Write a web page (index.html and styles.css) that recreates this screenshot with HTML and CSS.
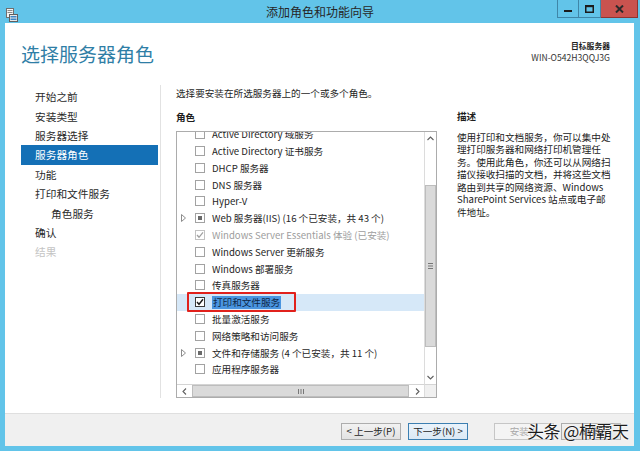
FILE: index.html
```html
<!DOCTYPE html>
<html lang="zh-CN">
<head>
<meta charset="utf-8">
<title>添加角色和功能向导</title>
<link rel="stylesheet" href="styles.css">
</head>
<body>
<div class="window">
  <div class="titlebar">
    <div class="app-icon">
      <svg width="12" height="14" viewBox="0 0 12 14">
        <rect x="0.5" y="0.5" width="7" height="9" fill="#f4f4f4" stroke="#6f6f6f"/>
        <rect x="1.5" y="2" width="5" height="1" fill="#8a8a8a"/>
        <rect x="1.5" y="4" width="5" height="1" fill="#8a8a8a"/>
        <rect x="3.5" y="6.5" width="8" height="7" fill="#e9e9e9" stroke="#5f5f5f"/>
        <rect x="4.5" y="8" width="6" height="1.5" fill="#3d86c6"/>
        <rect x="4.5" y="10.5" width="6" height="1.5" fill="#3d86c6"/>
      </svg>
    </div>
    <div class="title">添加角色和功能向导</div>
    <div class="caption-buttons">
      <div class="cbtn min"><svg width="8" height="8" viewBox="0 0 8 8"><rect x="0" y="5" width="8" height="2" fill="#1b1b1b"/></svg></div>
      <div class="cbtn max"><svg width="9" height="8" viewBox="0 0 9 8"><rect x="0.75" y="0.75" width="7.5" height="6.5" fill="none" stroke="#1b1b1b" stroke-width="1.5"/><rect x="0" y="0" width="9" height="2.2" fill="#1b1b1b"/></svg></div>
      <div class="cbtn close"><svg width="9" height="8" viewBox="0 0 9 8"><path d="M1 0.5 L8 7.5 M8 0.5 L1 7.5" stroke="#2a2a2a" stroke-width="2"/></svg></div>
    </div>
  </div>

  <div class="client">
    <div class="header">
      <h1 class="page-title">选择服务器角色</h1>
      <div class="target">
        <div class="target-label">目标服务器</div>
        <div class="target-name">WIN-O542H3QQJ3G</div>
      </div>
    </div>

    <div class="main">
      <ul class="nav">
        <li>开始之前</li>
        <li>安装类型</li>
        <li>服务器选择</li>
        <li class="active">服务器角色</li>
        <li>功能</li>
        <li>打印和文件服务</li>
        <li class="sub">角色服务</li>
        <li>确认</li>
        <li class="disabled">结果</li>
      </ul>
      <div class="sep"></div>

      <div class="content">
        <p class="instr">选择要安装在所选服务器上的一个或多个角色。</p>
        <div class="label">角色</div>
        <div class="listbox">
          <div class="rows">
            <div class="rows-inner">
              <div class="row"><span class="exp"></span><span class="cb"></span><span class="txt">Active Directory 域服务</span></div>
              <div class="row"><span class="exp"></span><span class="cb"></span><span class="txt">Active Directory 证书服务</span></div>
              <div class="row"><span class="exp"></span><span class="cb"></span><span class="txt">DHCP 服务器</span></div>
              <div class="row"><span class="exp"></span><span class="cb"></span><span class="txt">DNS 服务器</span></div>
              <div class="row"><span class="exp"></span><span class="cb"></span><span class="txt">Hyper-V</span></div>
              <div class="row"><span class="exp"><svg width="5" height="8" viewBox="0 0 5 8"><path d="M0.5 0.5 L4.5 4 L0.5 7.5 Z" fill="none" stroke="#8c8c8c"/></svg></span><span class="cb partial"></span><span class="txt">Web 服务器(IIS) (16 个已安装，共 43 个)</span></div>
              <div class="row disabled"><span class="exp"></span><span class="cb checked"><svg width="8" height="8" viewBox="0 0 8 8"><path d="M1 4 L3 6.3 L7 1.3" fill="none" stroke="#a0a0a0" stroke-width="1.3"/></svg></span><span class="txt">Windows Server Essentials 体验 (已安装)</span></div>
              <div class="row"><span class="exp"></span><span class="cb"></span><span class="txt">Windows Server 更新服务</span></div>
              <div class="row"><span class="exp"></span><span class="cb"></span><span class="txt">Windows 部署服务</span></div>
              <div class="row"><span class="exp"></span><span class="cb"></span><span class="txt">传真服务器</span></div>
              <div class="row selected"><span class="exp"></span><span class="cb checked dark"><svg width="8" height="8" viewBox="0 0 8 8"><path d="M1 4 L3 6.3 L7 1.3" fill="none" stroke="#1a1a1a" stroke-width="1.4"/></svg></span><span class="txt"><span class="sel-text">打印和文件服务</span></span><span class="mark"></span></div>
              <div class="row"><span class="exp"></span><span class="cb"></span><span class="txt">批量激活服务</span></div>
              <div class="row"><span class="exp"></span><span class="cb"></span><span class="txt">网络策略和访问服务</span></div>
              <div class="row"><span class="exp"><svg width="5" height="8" viewBox="0 0 5 8"><path d="M0.5 0.5 L4.5 4 L0.5 7.5 Z" fill="none" stroke="#8c8c8c"/></svg></span><span class="cb partial"></span><span class="txt">文件和存储服务 (4 个已安装，共 11 个)</span></div>
              <div class="row"><span class="exp"></span><span class="cb"></span><span class="txt">应用程序服务器</span></div>
            </div>
          </div>
          <div class="vscroll">
            <div class="sb-btn"><svg width="7" height="5" viewBox="0 0 7 5"><path d="M0.5 4 L3.5 1 L6.5 4" fill="none" stroke="#606060" stroke-width="1.1"/></svg></div>
            <div class="vtrack">
              <div class="vthumb"><svg width="5" height="6" viewBox="0 0 5 6"><rect y="0" width="5" height="1" fill="#777"/><rect y="2.5" width="5" height="1" fill="#777"/><rect y="5" width="5" height="1" fill="#777"/></svg></div>
            </div>
            <div class="sb-btn"><svg width="7" height="5" viewBox="0 0 7 5"><path d="M0.5 1 L3.5 4 L6.5 1" fill="none" stroke="#606060" stroke-width="1.1"/></svg></div>
          </div>
          <div class="hscroll">
            <div class="sb-btn h"><svg width="5" height="7" viewBox="0 0 5 7"><path d="M4 0.5 L1 3.5 L4 6.5" fill="none" stroke="#606060" stroke-width="1.1"/></svg></div>
            <div class="htrack">
              <div class="hthumb"><svg width="6" height="5" viewBox="0 0 6 5"><rect x="0" width="1" height="5" fill="#777"/><rect x="2.5" width="1" height="5" fill="#777"/><rect x="5" width="1" height="5" fill="#777"/></svg></div>
            </div>
            <div class="sb-btn h"><svg width="5" height="7" viewBox="0 0 5 7"><path d="M1 0.5 L4 3.5 L1 6.5" fill="none" stroke="#606060" stroke-width="1.1"/></svg></div>
          </div>
          <div class="corner"></div>
        </div>
      </div>

      <div class="desc">
        <div class="label">描述</div>
        <p class="desc-text">使用打印和文档服务，你可以集中处<br>理打印服务器和网络打印机管理任<br>务。使用此角色，你还可以从网络扫<br>描仪接收扫描的文档，并将这些文档<br>路由到共享的网络资源、Windows<br>SharePoint Services 站点或电子邮<br>件地址。</p>
      </div>
    </div>

    <div class="footer">
      <button class="btn">&lt; 上一步(P)</button>
      <button class="btn default">下一步(N) &gt;</button>
      <button class="btn disabled install">安装(I)</button>
      <button class="btn">取消</button>
    </div>
  </div>

  <div class="watermark">头条 @楠霸天</div>
</div>
</body>
</html>
```

FILE: styles.css
```css
* { box-sizing: border-box; margin: 0; padding: 0; }
html, body { width: 640px; height: 451px; overflow: hidden; }
body {
  background: #62c4e9;
  font-family: "Noto Sans CJK SC", "Noto Sans", sans-serif;
  color: #1e1e1e;
}
.window {
  width: 640px;
  height: 451px;
  display: flex;
  flex-direction: column;
  position: relative;
}

/* title bar */
.titlebar {
  height: 23px;
  flex: none;
  display: grid;
  grid-template-columns: 1fr auto 1fr;
  align-items: start;
}
.app-icon { padding: 3px 0 0 6px; height: 23px; }
.title { font-size: 12px; line-height: 23px; color: #262626; }
.caption-buttons { justify-self: end; display: flex; margin-right: 2px; }
.cbtn {
  height: 18px;
  display: flex;
  align-items: center;
  justify-content: center;
  border: 1px solid #3f86a8;
  border-top: none;
}
.cbtn.min { width: 22px; }
.cbtn.max { width: 22px; border-left: none; }
.cbtn.close { width: 37px; background: #c9534f; border-left: none; border-color: #8e3431; }

/* client */
.client {
  flex: 1;
  margin: 0 6px 5px 5px;
  background: #fff;
  display: flex;
  flex-direction: column;
}
.header {
  height: 62px;
  flex: none;
  display: flex;
  justify-content: space-between;
  padding: 18px 24px 0 16px;
}
.page-title {
  font-size: 19px;
  font-weight: normal;
  line-height: 26px;
  color: #2f7ea6;
}
.target { text-align: right; }
.target-label { font-size: 7.8px; font-weight: bold; line-height: 10px; color: #222; }
.target-name { font-size: 8.6px; line-height: 12px; color: #333; }

.main {
  flex: 1;
  display: flex;
  align-items: flex-start;
}
.nav {
  list-style: none;
  margin: 2.3px 0 0 16px;
  width: 137px;
  font-size: 10.7px;
}
.nav li { height: 19.4px; line-height: 19.4px; padding-left: 14px; color: #2a2a2a; }
.nav li.active { background: #1470b6; color: #fff; }
.nav li.sub { padding-left: 30px; }
.nav li.disabled { color: #c4c4c4; }
.sep { width: 1px; height: 313px; background: #e2e2e2; margin-left: 2px; }

.content {
  margin-left: 15px;
  width: 261px;
  padding-top: 1px;
  font-size: 9.6px;
}
.instr { line-height: 14px; }
.label { font-weight: bold; line-height: 14px; font-size: 9.6px; }
.content .label { margin-top: 10px; }

.listbox {
  margin-top: 7px;
  height: 267px;
  border: 1px solid #acacac;
  display: grid;
  grid-template-columns: 1fr 12px;
  grid-template-rows: 1fr 13px;
}
.rows { overflow: hidden; }
.rows-inner { margin-top: -6.2px; }
.row {
  height: 16.8px;
  display: flex;
  align-items: center;
  position: relative;
  white-space: nowrap;
}
.row .exp { width: 18px; flex: none; padding-left: 4px; display: flex; align-items: center; }
.cb {
  width: 10px;
  height: 10px;
  flex: none;
  border: 1px solid #a2a2a2;
  background: #fff;
  margin-right: 7px;
  display: flex;
  align-items: center;
  justify-content: center;
}
.cb.partial::after { content: ""; width: 4px; height: 4px; background: #6a6a6a; }
.cb.dark { border-color: #3a3a3a; }
.row.disabled { color: #9d9d9d; }
.row.disabled .cb { border-color: #c2c2c2; }
.row.selected { background: #d6e8f8; }
.sel-text { background: #4a95e0; color: #0e2646; line-height: 13px; display: inline-block; padding: 0 1px; }
.mark {
  position: absolute;
  left: 10px;
  top: -2px;
  width: 109px;
  height: 20px;
  border: 2px solid #e1211c;
  border-radius: 1px;
}

.vscroll {
  border-left: 1px solid #dcdcdc;
  display: flex;
  flex-direction: column;
  background: #fff;
}
.sb-btn { height: 13px; flex: none; display: flex; align-items: center; justify-content: center; }
.vtrack { flex: 1; padding: 40px 0 24px; display: flex; }
.vthumb {
  flex: 1;
  background: #dadada;
  border: 1px solid #bdbdbd;
  display: flex;
  align-items: center;
  justify-content: center;
}
.hscroll {
  border-top: 1px solid #d4d4d4;
  display: flex;
  background: #fff;
}
.sb-btn.h { height: auto; width: 14px; }
.htrack { flex: 1; display: flex; padding: 0 1px; }
.hthumb {
  flex: 1;
  background: #dadada;
  border: 1px solid #bdbdbd;
  display: flex;
  align-items: center;
  justify-content: center;
}
.corner { background: #f0f0f0; border-top: 1px solid #d4d4d4; border-left: 1px solid #dcdcdc; }

.desc { margin-left: 20px; padding-top: 24px; font-size: 9.6px; }
.desc-text { margin-top: 7.75px; line-height: 12.5px; white-space: nowrap; color: #222; }

.footer {
  height: 33px;
  flex: none;
  background: #f0f0f0;
  border-top: 1px solid #dfdfdf;
  display: flex;
  justify-content: flex-end;
  align-items: flex-start;
  gap: 7px;
  padding: 9px 13px 0 0;
}
.btn {
  width: 60px;
  height: 17px;
  font-family: inherit;
  font-size: 9.6px;
  color: #1e1e1e;
  border: 1px solid #adadad;
  background: linear-gradient(#f2f2f2, #e2e2e2);
  line-height: 15px;
}
.btn.default { border-color: #3c7fb1; background: linear-gradient(#eaf3fb, #dbe9f5); }
.btn.disabled { color: #a8a8a8; background: #f4f4f4; border-color: #c6c6c6; }
.btn.install { margin-left: 19px; }

.watermark {
  position: absolute;
  left: 527px;
  top: 420px;
  font-size: 17px;
  line-height: 22px;
  color: #1c1c1c;
  letter-spacing: -0.5px;
  text-shadow: 0 0 2px #fff, 0 0 2px #fff;
  white-space: nowrap;
}
```
